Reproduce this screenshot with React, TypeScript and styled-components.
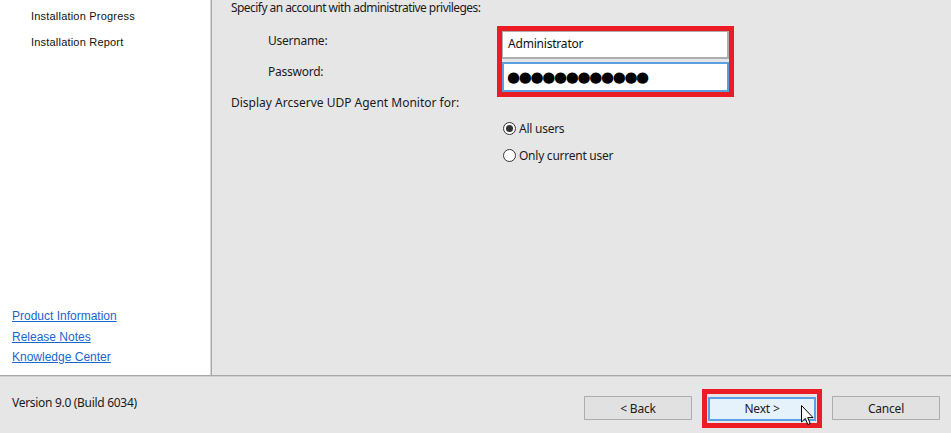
import React from "react";
import styled, { createGlobalStyle } from "styled-components";

const Global = createGlobalStyle`
  html, body { margin: 0; padding: 0; background: #e6e6e6; }
  body { font-family: "Noto Sans", "Open Sans", sans-serif; }
  * { box-sizing: border-box; }
`;

const Window = styled.div`
  width: 951px;
  height: 433px;
  display: flex;
  flex-direction: column;
  background: #e6e6e6;
  overflow: hidden;
`;

const Main = styled.div`
  display: flex;
  height: 376px;
  border-bottom: 1px solid #a8a8a8;
`;

const Sidebar = styled.aside`
  width: 212px;
  background: #fff;
  border-right: 1px solid #a8a8a8;
  box-shadow: inset -1px 0 0 #d4d4d4;
  display: flex;
  flex-direction: column;
  justify-content: space-between;
  padding: 9px 0 11px 0;
`;

const StepList = styled.ul`
  list-style: none;
  margin: 0;
  padding: 0 0 0 31px;
  display: flex;
  flex-direction: column;
  gap: 12px;
`;

const Step = styled.li`
  font-family: "Liberation Sans", Arial, sans-serif;
  font-size: 11px;
  line-height: 14px;
  color: #111;
  letter-spacing: 0.2px;
`;

const Links = styled.nav`
  display: flex;
  flex-direction: column;
  gap: 6.5px;
  padding-left: 12px;
`;

const Link = styled.a`
  font-family: "Liberation Sans", Arial, sans-serif;
  font-size: 12px;
  line-height: 14px;
  color: #1a66cc;
  text-decoration: underline;
  cursor: pointer;
`;

const Panel = styled.section`
  flex: 1;
  display: flex;
  flex-direction: column;
  padding: 1px 0 0 19px;
  font-size: 12px;
  color: #1b1b1b;
`;

const Text = styled.div<{ $top?: number; $spacing?: number }>`
  font-size: 12px;
  line-height: 14px;
  margin-top: ${(p) => p.$top ?? 0}px;
  letter-spacing: ${(p) => p.$spacing ?? -0.25}px;
  white-space: nowrap;
`;

const AccountRow = styled.div`
  display: flex;
  margin-top: 11px;
`;

const LabelColumn = styled.div`
  width: 266px;
  padding: 8px 0 0 37px;
  display: flex;
  flex-direction: column;
  gap: 17px;
`;

const Highlight = styled.div`
  border: 5px solid #ec1c24;
  display: flex;
  flex-direction: column;
  gap: 3px;
`;

const Input = styled.div<{ $focused?: boolean }>`
  width: 227px;
  height: ${(p) => (p.$focused ? 30 : 28)}px;
  background: #fff;
  border: 1px solid ${(p) => (p.$focused ? "#5a9fe0" : "#adadad")};
  border-width: ${(p) => (p.$focused ? "2px" : "1px 2px 2px 1px")};
  display: flex;
  align-items: center;
  padding: 0 0 3px ${(p) => (p.$focused ? 3 : 5)}px;
  font-size: 12px;
  color: #111;
  letter-spacing: -0.2px;
`;

const Dots = styled.span`
  font-family: "DejaVu Sans", sans-serif;
  font-size: 15px;
  line-height: 15px;
  letter-spacing: -1.35px;
  margin-top: 3px;
  color: #000;
`;

const RadioGroup = styled.div`
  margin: 10px 0 0 272px;
  display: flex;
  flex-direction: column;
  gap: 11px;
`;

const RadioRow = styled.label`
  display: flex;
  align-items: center;
  gap: 3px;
  height: 16px;
  font-size: 12px;
  letter-spacing: -0.25px;
`;

const RadioCircle = styled.span<{ $checked?: boolean }>`
  width: 13px;
  height: 13px;
  border-radius: 50%;
  border: 1px solid #333;
  background: #fff;
  display: flex;
  align-items: center;
  justify-content: center;
  &::after {
    content: "";
    width: 7px;
    height: 7px;
    border-radius: 50%;
    background: ${(p) => (p.$checked ? "#333" : "transparent")};
  }
`;

const Footer = styled.footer`
  flex: 1;
  display: flex;
  align-items: flex-start;
  padding: 19px 11px 0 12px;
  border-top: 1px solid #d0d0d0;
`;

const Version = styled.div`
  font-size: 12px;
  line-height: 14px;
  letter-spacing: -0.3px;
  color: #1b1b1b;
`;

const Buttons = styled.div`
  margin-left: auto;
  margin-top: -7px;
  display: flex;
  align-items: center;
  gap: 10px;
`;

const Button = styled.button<{ $default?: boolean }>`
  width: 108px;
  height: 24px;
  font-family: "Noto Sans", "Open Sans", sans-serif;
  font-size: 12px;
  letter-spacing: -0.2px;
  color: #1b1b1b;
  background: ${(p) => (p.$default ? "#e5f1fb" : "#e1e1e1")};
  border: ${(p) => (p.$default ? "2px solid #5aa0e6" : "1px solid #adadad")};
  padding: 0;
`;

const ButtonHighlight = styled.div`
  position: relative;
  border: 5px solid #ec1c24;
  padding: 2px 1px;
`;

const Cursor = styled.svg`
  position: absolute;
  left: 94px;
  top: 11px;
  width: 13px;
  height: 21px;
`;

export default function App() {
  return (
    <>
      <Global />
      <Window>
        <Main>
          <Sidebar>
            <StepList>
              <Step>Installation Progress</Step>
              <Step>Installation Report</Step>
            </StepList>
            <Links>
              <Link>Product Information</Link>
              <Link>Release Notes</Link>
              <Link>Knowledge Center</Link>
            </Links>
          </Sidebar>
          <Panel>
            <Text $spacing={-0.55}>Specify an account with administrative privileges:</Text>
            <AccountRow>
              <LabelColumn>
                <Text>Username:</Text>
                <Text>Password:</Text>
              </LabelColumn>
              <Highlight>
                <Input>Administrator</Input>
                <Input $focused>
                  <Dots>●●●●●●●●●●●●</Dots>
                </Input>
              </Highlight>
            </AccountRow>
            <Text $top={-1} $spacing={0}>Display Arcserve UDP Agent Monitor for:</Text>
            <RadioGroup>
              <RadioRow>
                <RadioCircle $checked />
                All users
              </RadioRow>
              <RadioRow>
                <RadioCircle />
                Only current user
              </RadioRow>
            </RadioGroup>
          </Panel>
        </Main>
        <Footer>
          <Version>Version 9.0 (Build 6034)</Version>
          <Buttons>
            <Button>&lt; Back</Button>
            <ButtonHighlight>
              <Button $default>Next &gt;</Button>
              <Cursor viewBox="0 0 13 21">
                <path
                  d="M0.5 0.5 L0.5 17 L4.3 13.4 L6.8 19.5 L9.2 18.5 L6.7 12.6 L12 12.6 Z"
                  fill="#fff"
                  stroke="#000"
                  strokeWidth="1"
                  strokeLinejoin="miter"
                />
              </Cursor>
            </ButtonHighlight>
            <Button>Cancel</Button>
          </Buttons>
        </Footer>
      </Window>
    </>
  );
}
